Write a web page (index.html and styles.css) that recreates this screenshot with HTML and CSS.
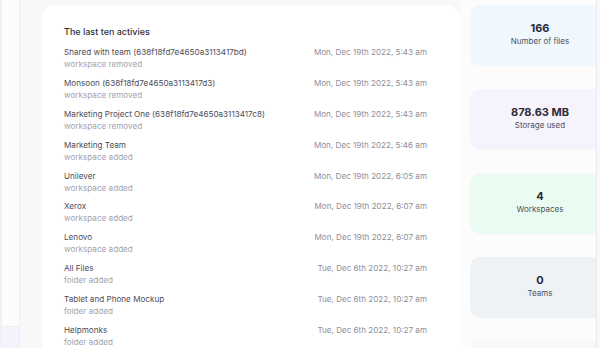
FILE: index.html
```html
<!DOCTYPE html>
<html>
<head>
<meta charset="utf-8">
<link rel="stylesheet" href="styles.css">
</head>
<body>
<div class="page">
  <aside class="sidebar"><div class="side-active"></div></aside>
  <main class="content">
    <section class="activity">
      <h2 class="title">The last ten activies</h2>
      <ul class="list">
        <li class="row"><div class="info"><div class="name">Shared with team (638f18fd7e4650a3113417bd)</div><div class="sub">workspace removed</div></div><div class="date">Mon, Dec 19th 2022, 5:43 am</div></li>
        <li class="row"><div class="info"><div class="name">Monsoon (638f18fd7e4650a3113417d3)</div><div class="sub">workspace removed</div></div><div class="date">Mon, Dec 19th 2022, 5:43 am</div></li>
        <li class="row"><div class="info"><div class="name">Marketing Project One (638f18fd7e4650a3113417c8)</div><div class="sub">workspace removed</div></div><div class="date">Mon, Dec 19th 2022, 5:43 am</div></li>
        <li class="row"><div class="info"><div class="name">Marketing Team</div><div class="sub">workspace added</div></div><div class="date">Mon, Dec 19th 2022, 5:46 am</div></li>
        <li class="row"><div class="info"><div class="name">Unilever</div><div class="sub">workspace added</div></div><div class="date">Mon, Dec 19th 2022, 6:05 am</div></li>
        <li class="row"><div class="info"><div class="name">Xerox</div><div class="sub">workspace added</div></div><div class="date">Mon, Dec 19th 2022, 6:07 am</div></li>
        <li class="row"><div class="info"><div class="name">Lenovo</div><div class="sub">workspace added</div></div><div class="date">Mon, Dec 19th 2022, 6:07 am</div></li>
        <li class="row"><div class="info"><div class="name">All Files</div><div class="sub">folder added</div></div><div class="date">Tue, Dec 6th 2022, 10:27 am</div></li>
        <li class="row"><div class="info"><div class="name">Tablet and Phone Mockup</div><div class="sub">folder added</div></div><div class="date">Tue, Dec 6th 2022, 10:27 am</div></li>
        <li class="row"><div class="info"><div class="name">Helpmonks</div><div class="sub">folder added</div></div><div class="date">Tue, Dec 6th 2022, 10:27 am</div></li>
      </ul>
    </section>
    <section class="stats">
      <div class="stat stat-blue"><div class="num">166</div><div class="label">Number of files</div></div>
      <div class="stat stat-purple"><div class="num">878.63 MB</div><div class="label">Storage used</div></div>
      <div class="stat stat-green"><div class="num">4</div><div class="label">Workspaces</div></div>
      <div class="stat stat-gray"><div class="num">0</div><div class="label">Teams</div></div>
      <div class="stat stat-next"></div>
    </section>
  </main>
</div>
</body>
</html>
```
FILE: styles.css
```css
* { box-sizing: border-box; }
html, body { margin: 0; padding: 0; }
body {
  width: 600px;
  height: 348px;
  overflow: hidden;
  background: #f8f8fa;
  font-family: Inter, "Liberation Sans", sans-serif;
}
.page {
  display: flex;
  height: 348px;
}
.sidebar {
  width: 20px;
  flex: none;
  background: #fcfcfd;
  border-left: 2px solid #f1f1f4;
  border-right: 1px solid #f0f0f3;
  display: flex;
  flex-direction: column;
  justify-content: flex-end;
}
.side-active {
  height: 22px;
  background: #f4f2fc;
  border-top: 1px solid #eeeef2;
}
.content {
  display: flex;
  padding: 5px 0 0 22px;
  flex: none;
}
.activity {
  width: 418px;
  background: #ffffff;
  border-radius: 14px 14px 0 0;
  padding: 21px 33px 0 22px;
  height: 360px;
}
.title {
  margin: 0 0 8px;
  font-size: 9px;
  line-height: 12px;
  font-weight: 500;
  color: #2f2f3a;
}
.list {
  list-style: none;
  margin: 0;
  padding: 0;
}
.row {
  display: flex;
  justify-content: space-between;
  align-items: flex-start;
  margin-bottom: 6.9px;
}
.name {
  font-size: 8.15px;
  line-height: 12px;
  color: #4d4d58;
}
.sub {
  font-size: 8.15px;
  line-height: 12px;
  color: #a2a2ae;
}
.date {
  font-size: 8.1px;
  line-height: 12px;
  color: #8e8e99;
}
.stats {
  width: 137px;
  flex: none;
  margin-top: -5px;
  padding: 5px 0 0 10px;
  background: #fcfcfd;
  border-right: 1px solid #ececf0;
  overflow: hidden;
  height: 353px;
}
.stat {
  width: 140px;
  height: 61px;
  border-radius: 10px;
  margin-bottom: 23px;
  display: flex;
  flex-direction: column;
  align-items: center;
  justify-content: center;
  padding-bottom: 4px;
}
.stat-blue { background: #f0f8fe; }
.stat-purple { background: #f6f3fd; }
.stat-green { background: #eafcf2; }
.stat-gray { background: #eff2f5; }
.stat-next { background: #f7f7fa; }
.num {
  font-size: 11px;
  line-height: 14px;
  font-weight: 700;
  color: #2c2c38;
}
.label {
  font-size: 8px;
  line-height: 12px;
  color: #50505c;
}
```
